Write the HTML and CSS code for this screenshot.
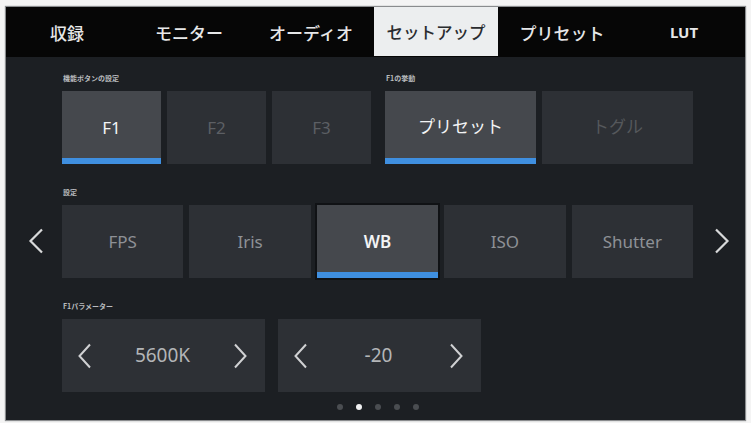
FILE: index.html
```html
<!DOCTYPE html>
<html lang="ja">
<head>
<meta charset="utf-8">
<link rel="stylesheet" href="styles.css">
</head>
<body>
<div class="screen">
  <nav class="tabs">
    <div class="tab">収録</div>
    <div class="tab">モニター</div>
    <div class="tab">オーディオ</div>
    <div class="tab active">セットアップ</div>
    <div class="tab">プリセット</div>
    <div class="tab lut">LUT</div>
  </nav>
  <div class="body">
    <div class="nav-col left">
      <svg class="chev" viewBox="0 0 16 26" width="16" height="26"><path d="M14 1.5 L2.5 13 L14 24.5" fill="none" stroke="#d8d9da" stroke-width="2.2"/></svg>
    </div>
    <div class="content">
      <div class="row row1">
        <div class="group g3">
          <div class="label">機能ボタンの設定</div>
          <div class="btns">
            <div class="btn on bar">F1</div>
            <div class="btn dim">F2</div>
            <div class="btn dim">F3</div>
          </div>
        </div>
        <div class="group g2">
          <div class="label">F1の挙動</div>
          <div class="btns">
            <div class="btn on bar jp">プリセット</div>
            <div class="btn dim jp">トグル</div>
          </div>
        </div>
      </div>
      <div class="row">
        <div class="group g5">
          <div class="label">設定</div>
          <div class="btns">
            <div class="btn mid">FPS</div>
            <div class="btn mid">Iris</div>
            <div class="btn on bar sel">WB</div>
            <div class="btn mid">ISO</div>
            <div class="btn mid">Shutter</div>
          </div>
        </div>
      </div>
      <div class="row">
        <div class="group">
          <div class="label">F1パラメーター</div>
          <div class="params">
            <div class="param">
              <svg class="pchev" viewBox="0 0 15 26" width="15" height="26"><path d="M13 1.5 L2.5 13 L13 24.5" fill="none" stroke="#d0d1d3" stroke-width="2"/></svg>
              <span class="pval">5600K</span>
              <svg class="pchev" viewBox="0 0 15 26" width="15" height="26"><path d="M2 1.5 L12.5 13 L2 24.5" fill="none" stroke="#d0d1d3" stroke-width="2"/></svg>
            </div>
            <div class="param">
              <svg class="pchev" viewBox="0 0 15 26" width="15" height="26"><path d="M13 1.5 L2.5 13 L13 24.5" fill="none" stroke="#d0d1d3" stroke-width="2"/></svg>
              <span class="pval">-20</span>
              <svg class="pchev" viewBox="0 0 15 26" width="15" height="26"><path d="M2 1.5 L12.5 13 L2 24.5" fill="none" stroke="#d0d1d3" stroke-width="2"/></svg>
            </div>
          </div>
        </div>
      </div>
      <div class="dots">
        <span class="dot"></span>
        <span class="dot cur"></span>
        <span class="dot"></span>
        <span class="dot"></span>
        <span class="dot"></span>
      </div>
    </div>
    <div class="nav-col right">
      <svg class="chev" viewBox="0 0 16 26" width="16" height="26"><path d="M2 1.5 L13.5 13 L2 24.5" fill="none" stroke="#d8d9da" stroke-width="2.2"/></svg>
    </div>
  </div>
</div>
</body>
</html>
```

FILE: styles.css
```css
* { box-sizing: border-box; }
html, body { margin: 0; padding: 0; }
body {
  background: #f4f4f4;
  width: 751px;
  height: 423px;
  overflow: hidden;
  font-family: "Noto Sans", "Noto Sans CJK JP", sans-serif;
}
.screen {
  margin: 7px 6px 0 6px;
  width: 739px;
  height: 413px;
  background: #1c1f23;
  display: flex;
  flex-direction: column;
  box-shadow: 0 0 1px 1px #8a8c8e;
}
.tabs {
  display: flex;
  height: 50px;
  background: #060606;
}
.tab {
  flex: 1;
  display: flex;
  align-items: center;
  justify-content: center;
  color: #e6e7e8;
  font-family: "Noto Sans CJK JP", sans-serif;
  font-size: 17px;
  font-weight: 500;
}
.tab.active {
  background: #eceeef;
  color: #2a2c2f;
  margin: 0 3px 1px 2px;
  flex: 0 0 124px;
  font-size: 16.5px;
}
.tab.lut { font-family: "Noto Sans", sans-serif; font-weight: 700; font-size: 15px; }
.body {
  flex: 1;
  display: flex;
}
.nav-col {
  display: flex;
  padding-top: 171px;
}
.nav-col.left { width: 56px; padding-left: 22px; }
.nav-col.right { width: 52px; padding-left: 21px; }
.chev { display: block; }
.content {
  flex: 1;
  display: flex;
  flex-direction: column;
}
.row { display: flex; gap: 14px; }
.row1 { margin-top: 16px; }
.row + .row { margin-top: 23px; }
.group { display: flex; flex-direction: column; }
.g3 { width: 309px; }
.g2 { width: 308px; }
.g5 { width: 631px; }
.label {
  font-family: "Noto Sans CJK JP", sans-serif;
  font-size: 7px;
  line-height: 10px;
  height: 18px;
  color: #b9bbbe;
  padding-left: 1px;
  font-weight: 700;
}
.btns { display: flex; gap: 6px; height: 73px; }
.btn {
  flex: 1;
  position: relative;
  display: flex;
  align-items: center;
  justify-content: center;
  background: #2d3035;
  color: #5c5f64;
  font-size: 17px;
}
.btn.on { background: #45484d; color: #f3f4f5; font-weight: 400; }
.btn.mid { color: #8e9196; }
.btn.jp { font-family: "Noto Sans CJK JP", sans-serif; font-size: 17px; padding-bottom: 4px; font-weight: 400; }
.btn.dim.jp { color: #55585c; }
.btn.sel { outline: 2px solid #101215; font-weight: 600; }
.btn.bar::after {
  content: "";
  position: absolute;
  left: 0; right: 0; bottom: 0;
  height: 6px;
  background: #3f8fe0;
}
.params { display: flex; gap: 13px; height: 73px; }
.param {
  width: 203px;
  background: #2d3035;
  display: flex;
  align-items: center;
  justify-content: space-between;
  padding: 0 17px 0 15px;
}
.pval { color: #b3b5b8; font-size: 19px; padding-bottom: 2px; }
.dots {
  display: flex;
  justify-content: center;
  gap: 13px;
  margin-top: 12px;
}
.dot { width: 6px; height: 6px; border-radius: 50%; background: #4a4d51; }
.dot.cur { background: #f0f1f2; }
```
